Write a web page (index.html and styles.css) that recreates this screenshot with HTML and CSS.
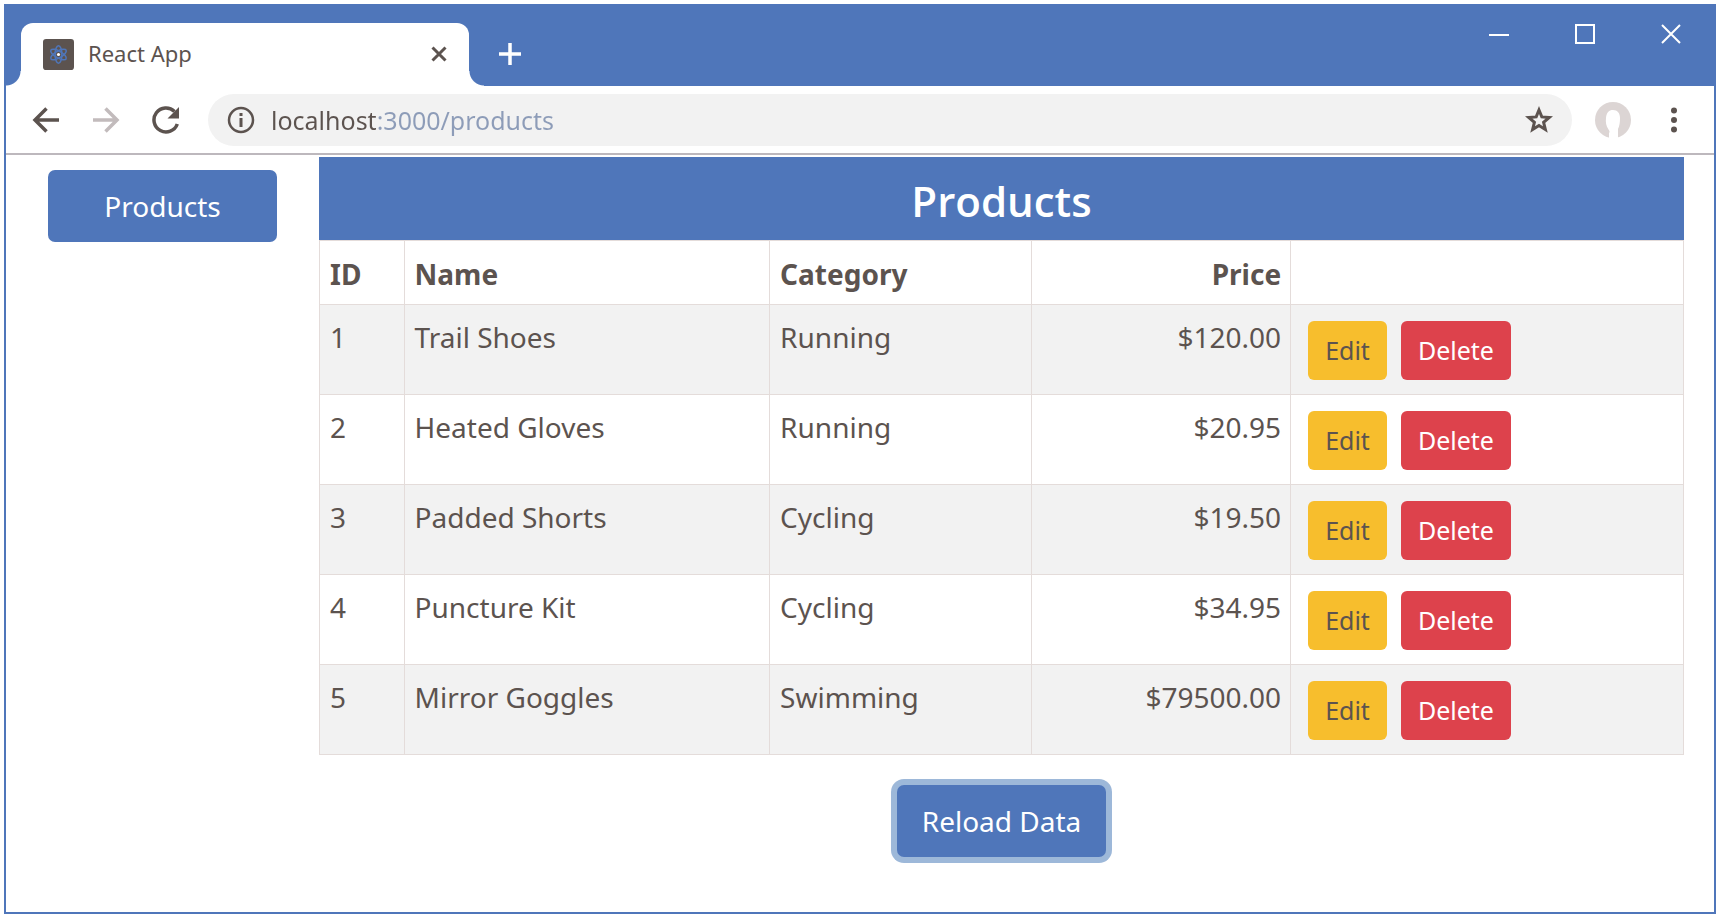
FILE: index.html
```html
<!DOCTYPE html>
<html lang="en">
<head>
<meta charset="utf-8">
<title>React App</title>
<link rel="stylesheet" href="styles.css">
</head>
<body>
<div class="window">
  <header class="titlebar">
    <div class="tab">
      <svg class="favicon" viewBox="0 0 30 30" aria-hidden="true">
        <rect width="30" height="30" rx="3" fill="#5c534f"/>
        <g fill="none" stroke="#4f76ba" stroke-width="1.500">
          <ellipse cx="15" cy="15" rx="8.500" ry="3.300" transform="rotate(30 15 15)"/>
          <ellipse cx="15" cy="15" rx="8.500" ry="3.300" transform="rotate(90 15 15)"/>
          <ellipse cx="15" cy="15" rx="8.500" ry="3.300" transform="rotate(150 15 15)"/>
        </g>
        <circle cx="15" cy="15" r="1.500" fill="#fff"/>
      </svg>
      <span class="tab-title">React App</span>
      <button class="icon-btn" type="button" aria-label="Close tab">
        <svg width="16" height="16" viewBox="0 0 16 16"><path d="M1.500 1.500L14.500 14.500M14.500 1.500L1.500 14.500" stroke="#5c534f" stroke-width="3" fill="none"/></svg>
      </button>
    </div>
    <button class="icon-btn new-tab" type="button" aria-label="New tab">
      <svg width="24" height="24" viewBox="0 0 24 24"><path d="M12 1V23M1 12H23" stroke="#fff" stroke-width="3.500" fill="none"/></svg>
    </button>
    <div class="window-controls">
      <button class="icon-btn" type="button" aria-label="Minimize">
        <svg width="20" height="20" viewBox="0 0 20 20"><path d="M0 11H20" stroke="#fff" stroke-width="2" fill="none"/></svg>
      </button>
      <button class="icon-btn" type="button" aria-label="Maximize">
        <svg width="20" height="20" viewBox="0 0 20 20"><rect x="1" y="1" width="18" height="18" stroke="#fff" stroke-width="2" fill="none"/></svg>
      </button>
      <button class="icon-btn" type="button" aria-label="Close">
        <svg width="20" height="20" viewBox="0 0 20 20"><path d="M1 1L19 19M19 1L1 19" stroke="#fff" stroke-width="2" fill="none"/></svg>
      </button>
    </div>
  </header>

  <div class="toolbar">
    <div class="nav-buttons">
      <button class="icon-btn" type="button" aria-label="Back">
        <svg width="28" height="28" viewBox="0 0 28 28"><path d="M27 14H3M14.500 2.500L3 14L14.500 25.500" stroke="#5c534f" stroke-width="3.500" fill="none"/></svg>
      </button>
      <button class="icon-btn" type="button" aria-label="Forward">
        <svg width="28" height="28" viewBox="0 0 28 28"><path d="M1 14H25M13.500 2.500L25 14L13.500 25.500" stroke="#c2bbbc" stroke-width="3.500" fill="none"/></svg>
      </button>
      <button class="icon-btn" type="button" aria-label="Reload">
        <svg width="28" height="28" viewBox="0 0 28 28"><path d="M25.300 18A12 12 0 1 1 22.500 5.500" stroke="#5c534f" stroke-width="3.500" fill="none"/><path d="M27 1V12.500H15.500Z" fill="#5c534f"/></svg>
      </button>
    </div>
    <div class="omnibox">
      <svg width="28" height="28" viewBox="0 0 28 28" aria-hidden="true"><circle cx="14" cy="14" r="12" stroke="#5c534f" stroke-width="2.500" fill="none"/><path d="M14 12V21M14 7V10" stroke="#5c534f" stroke-width="3" fill="none"/></svg>
      <input class="url" type="text" aria-label="Address" value="localhost:3000/products">
      <button class="icon-btn" type="button" aria-label="Bookmark this page">
        <svg width="28" height="28" viewBox="0 0 28 28"><path d="M14 4L16.800 10.900L24.300 11.500L18.600 16.300L20.400 23.600L14 19.600L7.600 23.600L9.400 16.300L3.700 11.500L11.200 10.900Z" stroke="#5c534f" stroke-width="3" fill="none"/></svg>
      </button>
    </div>
    <button class="icon-btn" type="button" aria-label="Profile">
      <svg width="38" height="38" viewBox="0 0 38 38"><circle cx="19" cy="19" r="18" fill="#dcd5d4"/><path d="M15 38V32C16 31 15.500 30 14.500 28.500C12 25 11.500 21 12 17C12.500 11.500 15 9 19 9C23.500 9 26 12 26 17C26 21.500 25.500 25 24 28V38Z" fill="#fff"/></svg>
    </button>
    <button class="icon-btn menu" type="button" aria-label="Menu">
      <svg width="28" height="28" viewBox="0 0 28 28"><g fill="#5c534f"><circle cx="14" cy="4.500" r="3"/><circle cx="14" cy="14" r="3"/><circle cx="14" cy="23.500" r="3"/></g></svg>
    </button>
  </div>

  <main class="page">
    <nav class="sidebar">
      <a class="btn btn-primary" href="/products">Products</a>
    </nav>
    <section class="content">
      <h1 class="heading">Products</h1>
      <table class="products">
        <colgroup><col class="col-id"><col class="col-name"><col class="col-category"><col class="col-price"><col></colgroup>
        <thead>
          <tr><th>ID</th><th>Name</th><th>Category</th><th class="price">Price</th><th></th></tr>
        </thead>
        <tbody>
          <tr><td>1</td><td>Trail Shoes</td><td>Running</td><td class="price">$120.00</td><td class="actions"><button class="btn-sm btn-edit" type="button">Edit</button><button class="btn-sm btn-delete" type="button">Delete</button></td></tr>
          <tr><td>2</td><td>Heated Gloves</td><td>Running</td><td class="price">$20.95</td><td class="actions"><button class="btn-sm btn-edit" type="button">Edit</button><button class="btn-sm btn-delete" type="button">Delete</button></td></tr>
          <tr><td>3</td><td>Padded Shorts</td><td>Cycling</td><td class="price">$19.50</td><td class="actions"><button class="btn-sm btn-edit" type="button">Edit</button><button class="btn-sm btn-delete" type="button">Delete</button></td></tr>
          <tr><td>4</td><td>Puncture Kit</td><td>Cycling</td><td class="price">$34.95</td><td class="actions"><button class="btn-sm btn-edit" type="button">Edit</button><button class="btn-sm btn-delete" type="button">Delete</button></td></tr>
          <tr><td>5</td><td>Mirror Goggles</td><td>Swimming</td><td class="price">$79500.00</td><td class="actions"><button class="btn-sm btn-edit" type="button">Edit</button><button class="btn-sm btn-delete" type="button">Delete</button></td></tr>
        </tbody>
      </table>
      <div class="footer">
        <button class="btn btn-primary btn-focused" type="button">Reload Data</button>
      </div>
    </section>
  </main>
</div>
</body>
</html>
```
FILE: styles.css
```css
:root {
  --blue: #4f76ba;
  --ring: #9db8d9;
  --ink: #5c534f;
  --stripe: #f2f2f2;
  --line: #e4dcda;
}

* {
  box-sizing: border-box;
}

body {
  margin: 0;
  padding: 4px;
  min-height: 100vh;
  display: flex;
  background: #fff;
  color: var(--ink);
  font: 28px/44px "Noto Sans", "Open Sans", sans-serif;
}

button,
input {
  font: inherit;
  color: inherit;
  border: 0;
  margin: 0;
  padding: 0;
  background: none;
}

svg {
  display: block;
  flex: none;
}

.window {
  flex: 1;
  display: flex;
  flex-direction: column;
  border: 2px solid var(--blue);
  border-top: 0;
}

.icon-btn {
  display: block;
  flex: none;
}

.titlebar {
  display: flex;
  align-items: flex-end;
  height: 82px;
  padding-left: 15px;
  background: var(--blue);
}

.tab {
  position: relative;
  display: flex;
  align-items: center;
  gap: 14px;
  width: 448px;
  height: 63px;
  padding: 0 22px 1px;
  border-radius: 12px 12px 0 0;
  background: #fff;
}

.tab::before,
.tab::after {
  content: "";
  position: absolute;
  bottom: 0;
  width: 15px;
  height: 15px;
}

.tab::before {
  right: 100%;
  background: radial-gradient(circle at 0 0, var(--blue) 14px, #fff 15px);
}

.tab::after {
  left: 100%;
  background: radial-gradient(circle at 100% 0, var(--blue) 14px, #fff 15px);
}

.favicon {
  width: 31px;
  height: 31px;
}

.tab-title {
  flex: 1;
  padding-bottom: 3px;
  font-size: 22px;
  line-height: 32px;
}

.new-tab {
  margin: 0 0 20px 29px;
}

.window-controls {
  display: flex;
  align-self: flex-start;
  gap: 66px;
  margin-left: auto;
  padding: 20px 33px 0 0;
}

.toolbar {
  display: flex;
  align-items: center;
  height: 69px;
  padding: 0 26px;
  gap: 22px;
  border-bottom: 2px solid #bdb8bd;
}

.nav-buttons {
  display: flex;
  gap: 32px;
  margin-right: 6px;
}

.menu {
  margin-left: 6px;
}

.omnibox {
  flex: 1;
  display: flex;
  align-items: center;
  gap: 16px;
  height: 52px;
  padding: 0 19px;
  border-radius: 26px;
  background: var(--stripe);
}

.url {
  flex: 1;
  min-width: 0;
  height: 40px;
  font-size: 25px;
  color: transparent;
  background: linear-gradient(90deg, var(--ink) 106px, #8d9cb8 106px);
  background-clip: text;
  -webkit-background-clip: text;
}

.page {
  flex: 1;
  display: flex;
  gap: 42px;
  padding: 2px 30px 30px 42px;
}

.sidebar {
  flex: 0 0 229px;
  padding-top: 13px;
}

.content {
  flex: 1;
}

.btn {
  display: block;
  padding: 14px 25px;
  border-radius: 7px;
  text-align: center;
  text-decoration: none;
}

.btn-primary {
  background: var(--blue);
  color: #fff;
}

.btn-focused {
  box-shadow: 0 0 0 6px var(--ring);
}

.heading {
  margin: 0;
  padding: 14px 11px 9px;
  background: var(--blue);
  color: #fff;
  font: 600 42px/60px "Open Sans", "Noto Sans", sans-serif;
  text-align: center;
}

.products {
  width: 100%;
  table-layout: fixed;
  border-collapse: collapse;
}

.products th,
.products td {
  padding: 10px;
  border: 1px solid var(--line);
  text-align: left;
  vertical-align: top;
}

.products th {
  padding: 11px 10px 8px;
}

.products tbody tr:nth-child(odd) {
  background: var(--stripe);
}

.products .price {
  padding-right: 9px;
  text-align: right;
}

.products .actions {
  padding: 16px 17px 14px;
  font-size: 0;
  line-height: 0;
}

.col-id {
  width: 6.2%;
}

.col-name {
  width: 26.8%;
}

.col-category {
  width: 19.2%;
}

.col-price {
  width: 19%;
}

.btn-sm {
  padding: 9px 17px;
  border-radius: 6px;
  font-size: 25px;
  line-height: 41px;
}

.btn-edit {
  margin-right: 14px;
  background: #f7be2d;
}

.btn-delete {
  background: #dd424c;
  color: #fff;
}

.footer {
  display: flex;
  justify-content: center;
  padding-top: 30px;
}
```
